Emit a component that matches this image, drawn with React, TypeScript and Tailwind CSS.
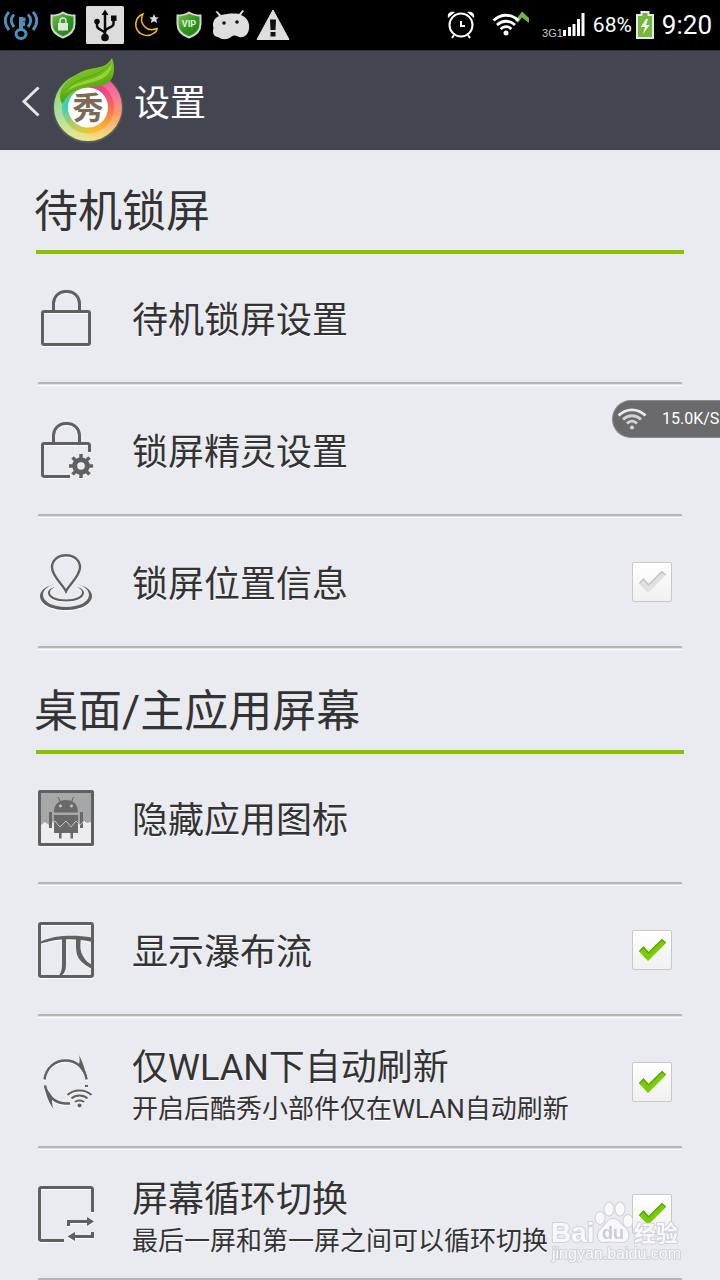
import { useState } from "react";
import type { ReactNode } from "react";

const ink = "#606060";

function KeySignalIcon() {
  return (
    <svg width="34" height="30" viewBox="0 0 34 30" fill="none" stroke="#4a92bd" strokeWidth="3">
      <path d="M5 2C0 7 0 14 5 20M10 4.500C6.500 8 6.500 13 10 17M29 2c5 5 5 12 0 18M24 4.500c3.500 3.500 3.500 8.500 0 12.500" />
      <ellipse cx="17" cy="24" rx="5" ry="4.500" />
      <path d="M17 20V7M17 9.500h4.500M17 14h4" strokeWidth="4" />
    </svg>
  );
}

function ShieldIcon({ children, id }: { children: ReactNode; id: string }) {
  return (
    <svg width="26" height="28" viewBox="0 0 26 28">
      <defs>
        <linearGradient id={id} x1="0" y1="0" x2="1" y2="1">
          <stop offset="0" stopColor="#7fc24a" />
          <stop offset="0.5" stopColor="#2f9a1c" />
          <stop offset="1" stopColor="#1c7a10" />
        </linearGradient>
      </defs>
      <path
        d="M13 1.500C9 4 5.500 4.500 1.500 4.500V13C1.500 20 6 24 13 26.500 20 24 24.500 20 24.500 13V4.500C20.500 4.500 17 4 13 1.500Z"
        fill={`url(#${id})`}
        stroke="#d4d8d4"
        strokeWidth="2"
      />
      {children}
    </svg>
  );
}

function UsbIcon() {
  return (
    <svg width="38" height="38" viewBox="0 0 38 38">
      <rect width="38" height="38" rx="1.500" fill="#dcdcdc" />
      <g fill="none" stroke="#0a0a0a" strokeWidth="2.500">
        <path d="M19 8v23M11 17v3c0 4 8 4 8 8M27.500 14v4c0 4-8.500 3.500-8.500 8" />
      </g>
      <path d="M19 3.500 22.500 9h-7ZM25 9.500h5.500V15H25Z" fill="#0a0a0a" />
      <circle cx="11" cy="15.500" r="2.800" fill="#0a0a0a" />
      <circle cx="19" cy="31.500" r="3.800" fill="#0a0a0a" />
    </svg>
  );
}

function MoonIcon() {
  return (
    <svg width="26" height="26" viewBox="0 0 26 26">
      <path
        d="M9 2C3 4 1 10 2 15c2 8 12 11 18 6 2-1 3-3 3-4.500-5 2-9 1.500-12-1.500C7 11 6.500 6.500 9 2Z"
        fill="none"
        stroke="#f5bd10"
        strokeWidth="1.500"
      />
      <path d="m20 2 1.400 3.200 3.400.2-2.500 2.200.8 3.400L20 9.200 16.900 11l.8-3.400-2.500-2.200 3.400-.2Z" fill="#ddd" />
    </svg>
  );
}

function DroidHeadIcon() {
  return (
    <svg width="38" height="30" viewBox="0 0 38 30">
      <path
        d="M7 6 3.500 1.500 5 1l4 4C14 4 21 3 27 4L30.500 0l1.500 1-3 4c6 2 9 8 8 14-1 6-5 9-10 8-3-2-6-2-8 0-4 3-9 3-13 0C2 27 0 23 1.500 18 0 13 2 8 7 6Z"
        fill="#dedede"
      />
      <circle cx="12" cy="13" r="1.800" fill="#111" />
      <circle cx="25" cy="12" r="1.800" fill="#111" />
    </svg>
  );
}

function WarningIcon() {
  return (
    <svg width="34" height="32" viewBox="0 0 34 32">
      <path d="M17 1 33 30.500H1Z" fill="#dedede" stroke="#dedede" strokeLinejoin="round" />
      <path d="M14 10.500h6l-.5 10.500h-5ZM14.500 23h5v4.500h-5Z" fill="#111" />
    </svg>
  );
}

function AlarmIcon() {
  return (
    <svg width="30" height="30" viewBox="0 0 30 30" fill="none" stroke="#fff" strokeWidth="2">
      <circle cx="15" cy="15" r="11.500" />
      <path d="M15 11v5h4M8 25l-2 3M22 25l2 3" />
      <path d="M2 8C1 3 4 1 9 2ZM28 8c1-5-2-7-7-6Z" fill="#fff" stroke="none" />
    </svg>
  );
}

function WifiUpIcon() {
  return (
    <svg width="38" height="28" viewBox="0 0 38 28" fill="none" stroke="#fff">
      <path d="m23 10 7-9.500L37 7v5l-7-5.500-4 5Z" fill="#6cbb3f" stroke="none" />
      <path d="M1.500 9.500C9 2.500 19 2.500 26.500 9.500M5 14c5.500-5 12.500-5 18 0M8.500 18c3.500-3 7.500-3 11 0" strokeWidth="2.800" />
      <circle cx="14" cy="22" r="2.500" fill="#fff" stroke="none" />
    </svg>
  );
}

function BarsIcon() {
  return (
    <svg width="22" height="24" viewBox="0 0 22 24" fill="#fff">
      <path d="M0 17h3v6H0ZM5 14h3v9H5ZM9.500 11h3v12h-3ZM14 6h3v17h-3ZM18.500 0h3v23h-3Z" />
    </svg>
  );
}

function BatteryIcon() {
  return (
    <svg width="18" height="28" viewBox="0 0 18 28">
      <path d="M5.500 4V1h7v3H17v23H1V4Z" fill="#71ba3c" stroke="#e8e8e8" strokeWidth="2" />
      <path d="M10 8 5 16h4l-2 7 6.500-9H10l2-6Z" fill="#fff" />
    </svg>
  );
}

function StatusBar() {
  return (
    <div className="flex h-[50px] shrink-0 items-center justify-between bg-black pr-2 text-white">
      <div className="grid grid-cols-[repeat(7,42px)] items-center justify-items-center">
        <KeySignalIcon />
        <ShieldIcon id="shield-lock">
          <path d="M8 12h10v7.500H8Z" fill="#dfe5df" />
          <path d="M10 12v-2a3 3 0 0 1 6 0v2" fill="none" stroke="#dfe5df" strokeWidth="1.500" />
        </ShieldIcon>
        <UsbIcon />
        <MoonIcon />
        <ShieldIcon id="shield-vip">
          <text x="13" y="16" textAnchor="middle" className="fill-[#e4eedd] font-[Roboto] text-[9px] font-bold">
            VIP
          </text>
        </ShieldIcon>
        <DroidHeadIcon />
        <WarningIcon />
      </div>
      <div className="flex items-center">
        <AlarmIcon />
        <span className="ml-4 flex">
          <WifiUpIcon />
        </span>
        <span className="ml-3 self-end font-['Liberation_Sans',sans-serif] text-[11px] leading-4 text-[#c8c8c8]">
          3G1
        </span>
        <BarsIcon />
        <span className="ml-2 text-[21px] leading-8">68%</span>
        <span className="mx-1 flex">
          <BatteryIcon />
        </span>
        <span className="ml-1 text-[26px] leading-8">9:20</span>
      </div>
    </div>
  );
}

function AppLogo() {
  return (
    <svg width="72" height="90" viewBox="0 0 72 90" aria-hidden="true">
      <defs>
        <linearGradient id="ring-left" x1="0" y1="0" x2="0" y2="1">
          <stop offset="0" stopColor="#8fcf4a" />
          <stop offset="0.6" stopColor="#a9e0a0" />
          <stop offset="1" stopColor="#f0e88a" />
        </linearGradient>
        <linearGradient id="ring-right" x1="0" y1="0" x2="0" y2="1">
          <stop offset="0" stopColor="#f0489a" />
          <stop offset="0.35" stopColor="#f9789a" />
          <stop offset="0.65" stopColor="#fba464" />
          <stop offset="1" stopColor="#f0e88a" />
        </linearGradient>
        <linearGradient id="inner-left" x1="0" y1="0" x2="0" y2="1">
          <stop offset="0" stopColor="#5fc63c" />
          <stop offset="0.5" stopColor="#3fcfc0" />
          <stop offset="1" stopColor="#f0c82a" />
        </linearGradient>
        <linearGradient id="inner-right" x1="0" y1="0" x2="0" y2="1">
          <stop offset="0" stopColor="#e8309a" />
          <stop offset="0.5" stopColor="#fb6a55" />
          <stop offset="1" stopColor="#f8c824" />
        </linearGradient>
        <linearGradient id="leaf" x1="0" y1="0" x2="0.4" y2="1">
          <stop offset="0" stopColor="#9ad634" />
          <stop offset="0.6" stopColor="#6ab81a" />
          <stop offset="1" stopColor="#3f9410" />
        </linearGradient>
        <radialGradient id="glow">
          <stop offset="0.88" stopColor="#e8f0a0" stopOpacity="0.3" />
          <stop offset="1" stopColor="#e8f0a0" stopOpacity="0" />
        </radialGradient>
      </defs>
      <circle cx="36" cy="52" r="36" fill="url(#glow)" />
      <path d="M36 17a34 34 0 0 0 0 68Z" fill="url(#ring-left)" />
      <path d="M36 17a34 34 0 0 1 0 68Z" fill="url(#ring-right)" />
      <path d="M36 25.500a26 26 0 0 0 0 52Z" fill="url(#inner-left)" />
      <path d="M36 25.500a26 26 0 0 1 0 52Z" fill="url(#inner-right)" />
      <circle cx="36" cy="51.500" r="20" fill="#fff" />
      <path
        d="M10 48C5 38 10 28 19.500 22 26 17 31 14.500 38 13c9-2 17-2 22-11 3 8 3 18-2 23-6 6-13 5-20 6-10 1-20 3-28 17Z"
        fill="url(#leaf)"
      />
      <path d="M13 37C24 20 47 29 60 8 57 31 29 23 13 37Z" fill="#bdea52" opacity="0.55" />
      <path d="M14 35C26 18 46 24 59 7" fill="none" stroke="#55a614" />
      <text
        x="36"
        y="63"
        textAnchor="middle"
        className="fill-[#7c6a55] font-['Noto_Sans_CJK_SC',sans-serif] text-[31px] font-bold"
      >
        秀
      </text>
    </svg>
  );
}

function ActionBar() {
  return (
    <header className="flex h-[100px] shrink-0 items-center border-t border-[#30333c] bg-[#434651] pl-5 text-white">
      <button type="button" aria-label="返回" className="flex items-center">
        <svg width="22" height="32" viewBox="0 0 22 32" fill="none" stroke="#e4e4e6" strokeWidth="3">
          <path d="M18.500 2.500 4 16.500l14.500 14" />
        </svg>
      </button>
      <span className="ml-2.5 flex">
        <AppLogo />
      </span>
      <h1 className="ml-2.5 pt-1.5 text-[36px] leading-[48px]">设置</h1>
    </header>
  );
}

function RowIcon({ children }: { children: ReactNode }) {
  return (
    <svg
      width="56"
      height="56"
      viewBox="0 0 56 56"
      fill="none"
      stroke={ink}
      strokeWidth="3"
      className="shrink-0 drop-shadow-[0_1px_0_#ffffff]"
      aria-hidden="true"
    >
      {children}
    </svg>
  );
}

const shackle = "M15.500 21V13.500a12 12 0 0 1 12-12h2a12 12 0 0 1 12 12V21";

function LockIcon() {
  return (
    <RowIcon>
      <rect x="4.500" y="21.500" width="47" height="33" rx="1.500" />
      <path d={shackle} />
    </RowIcon>
  );
}

function LockGearIcon() {
  return (
    <RowIcon>
      <path d={shackle} />
      <path d="M51.500 30v-7a1.500 1.500 0 0 0-1.500-1.500H6A1.500 1.500 0 0 0 4.500 23v30A1.500 1.500 0 0 0 6 54.500h26" />
      <circle cx="43" cy="44" r="6.300" strokeWidth="5" />
      <path
        d="M43 32v4M43 52v4M31 44h4M51 44h4M34.500 35.500l3 3M48.500 49.500l3 3M51.500 35.500l-3 3M37.500 49.500l-3 3"
        strokeWidth="3.500"
      />
    </RowIcon>
  );
}

function PinIcon() {
  return (
    <RowIcon>
      <path
        d="M28 37.500C25 31 14 22 14 13.500 14 6 20 1.200 28 1.200S42 6 42 13.500C42 22 31 31 28 37.500Z"
        strokeWidth="2.400"
      />
      <g fill={ink} stroke="none">
        <path d="M17 30C9 32 2 36 2 42c0 8 11 14 26 14s26-6 26-14c0-6-7-10-15-12 7 2 12 6 12 11 0 7-10 12-23 12S5 48 5 41c0-5 5-9 12-11Z" />
        <path d="M17 33c-4 1-7 3-7 6 0 5 8 8.500 18 8.500S46 44 46 39c0-3-3-5-7-6 3 1.500 5 3 5 5.500 0 4-7 7-16 7s-16-3-16-7c0-2.500 2-4 5-5.500Z" />
      </g>
    </RowIcon>
  );
}

function HiddenAppIcon() {
  return (
    <RowIcon>
      <rect x="1.500" y="1.500" width="53" height="53" rx="1" fill="#a6a7a8" />
      <path d="M3 35l4-3 4 3 6-4 6 5 5-5 5 5 5-5 4 4 4-4 3 2 4-1v21H3Z" fill="#ededf1" stroke="none" />
      <g fill="#69696a" stroke="none">
        <path d="M16 22.500C16 14 21 10 28 10s12 4 12 12.500ZM16 25h24v18H16ZM11 22h3v16h-3ZM42 22h3v16h-3ZM21 43h2.500v5.500H21ZM32.500 43H35v5.500h-2.500Z" />
      </g>
      <path d="m22.500 12-2.500-5M33.500 12l2-5" strokeWidth="1" />
      <path d="M14 33l3-2 5 6 6-6 5 6 5-6 4 4 3-3" stroke="#c4c4c6" strokeWidth="1" />
      <circle cx="22.500" cy="16" r="1.400" fill="#ccc" stroke="none" />
      <circle cx="33.500" cy="16" r="1.400" fill="#ccc" stroke="none" />
      <rect x="1.500" y="1.500" width="53" height="53" rx="1" />
    </RowIcon>
  );
}

function WaterfallIcon() {
  return (
    <RowIcon>
      <rect x="1.500" y="1.500" width="53" height="53" rx="1.500" />
      <g fill={ink} stroke="none">
        <path d="M3 19.500C16 13 36 12.500 54 15.500V20C38 16 19 16 3 21.500Z" />
        <path d="M24 16h4v27c0 5-1.500 8-4 10.500h-3c2-3 3-6 3-10.500Z" />
        <path d="M38 16h5c-1 8-1 13 2 18 2 4 5 7 8.500 8.500v4C48 44 43 40 40.500 36 37.500 31 38 24 38 16Z" />
      </g>
    </RowIcon>
  );
}

function RefreshWifiIcon() {
  return (
    <RowIcon>
      <path d="M6.500 25.500C8 14 17 6.500 27.500 6.500S47 14 48.500 25.500" strokeWidth="2.400" />
      <path d="M7 31.500C9 42 17 49 27 49.500h5" strokeWidth="2.400" />
      <g fill={ink} stroke="none">
        <path d="M41 1c4 7 6 15 8.500 24L40 11c2-2 2-6 1-10Z" />
        <path d="M6 31l8.500 12c-1 4-.5 8 1 12C10 48 8 40 6 31Z" />
        <circle cx="41.500" cy="51.500" r="2" />
      </g>
      <path
        d="M29.500 41c6.500-6 17.500-6 24 0M33.500 44.500c4.500-4 11.500-4 16 0M37 48c2.500-2 6.500-2 9 0M47 32h3"
        strokeWidth="2"
      />
    </RowIcon>
  );
}

function LoopIcon() {
  return (
    <RowIcon>
      <path d="M54.500 26V3A1.500 1.500 0 0 0 53 1.500H3A1.500 1.500 0 0 0 1.500 3v50A1.500 1.500 0 0 0 3 54.500h23" />
      <path d="M30.500 40v-4.500H50M54.500 46v4.500H36" />
      <path d="m49 31 7 4.500-7 4.500ZM37 46l-7.500 4.500L37 55Z" fill={ink} stroke="none" />
    </RowIcon>
  );
}

type CheckProps = {
  id: string;
  checked: boolean;
  onChange: () => void;
};

function Check({ id, checked, onChange }: CheckProps) {
  return (
    <span className="mr-2.5 grid size-10 shrink-0">
      <input
        id={id}
        type="checkbox"
        checked={checked}
        onChange={onChange}
        className="col-start-1 row-start-1 size-10 appearance-none rounded-[2px] border border-[#c8c8ca] bg-linear-to-b from-white to-[#f0f0f0]"
      />
      <svg width="40" height="40" viewBox="0 0 40 40" className="pointer-events-none col-start-1 row-start-1">
        <path d="M7 21.500 11.500 16.500 16.500 22 30 9 34 13 16 31Z" fill={checked ? "#78cc00" : "#e2e2e2"} />
        <path
          d="M7.500 21.500 11.500 17.200 16.500 23 30 9.800 33.500 13"
          fill="none"
          stroke={checked ? "#5fa80c" : "#c4c4c4"}
          strokeWidth="1.500"
        />
      </svg>
    </span>
  );
}

type Item = {
  id: string;
  title: string;
  note?: string;
  icon: ReactNode;
  toggle?: boolean;
};

type Section = { title: string; items: Item[] };

const sections: Section[] = [
  {
    title: "待机锁屏",
    items: [
      { id: "lock", title: "待机锁屏设置", icon: <LockIcon /> },
      { id: "sprite", title: "锁屏精灵设置", icon: <LockGearIcon /> },
      { id: "location", title: "锁屏位置信息", icon: <PinIcon />, toggle: true },
    ],
  },
  {
    title: "桌面/主应用屏幕",
    items: [
      { id: "hide", title: "隐藏应用图标", icon: <HiddenAppIcon /> },
      { id: "waterfall", title: "显示瀑布流", icon: <WaterfallIcon />, toggle: true },
      {
        id: "wlan",
        title: "仅WLAN下自动刷新",
        note: "开启后酷秀小部件仅在WLAN自动刷新",
        icon: <RefreshWifiIcon />,
        toggle: true,
      },
      {
        id: "loop",
        title: "屏幕循环切换",
        note: "最后一屏和第一屏之间可以循环切换",
        icon: <LoopIcon />,
        toggle: true,
      },
    ],
  },
];

function RowBody({ item }: { item: Item }) {
  return (
    <>
      {item.icon}
      <span className="flex min-w-0 flex-1 flex-col pt-1.5 pl-[38px] text-left [text-shadow:0_1px_0_#ffffff]">
        <span className="text-[36px] leading-[48px]">{item.title}</span>
        {item.note && <span className="text-[26px] leading-[34px] whitespace-nowrap">{item.note}</span>}
      </span>
    </>
  );
}

function Watermark() {
  return (
    <svg
      width="132"
      height="66"
      viewBox="0 0 132 66"
      className="pointer-events-none absolute right-[38px] bottom-[14px] opacity-90"
      fill="#fafafc"
      stroke="#cfd0d5"
      strokeWidth="2"
      strokeLinejoin="round"
      paintOrder="stroke"
    >
      <text x="1" y="42" className="font-['Liberation_Sans',sans-serif] text-[28px] font-bold">
        Bai
      </text>
      <ellipse cx="50" cy="18" rx="4.500" ry="6" />
      <ellipse cx="59" cy="9" rx="4.500" ry="6.500" />
      <ellipse cx="70" cy="9" rx="4.500" ry="6.500" />
      <ellipse cx="78" cy="21" rx="4.500" ry="6" />
      <path d="M63 19c6 0 8 6 12 9 5 4 5 14-3 14-6 0-12-1-17 0-8 1-9-9-4-13 5-4 6-10 12-10Z" />
      <text
        x="63"
        y="39"
        textAnchor="middle"
        className="fill-[#c9cad0] font-['Liberation_Sans',sans-serif] text-[18px] font-bold"
        stroke="none"
      >
        du
      </text>
      <text x="84" y="41" className="font-['Noto_Sans_CJK_SC',sans-serif] text-[22px] font-bold">
        经验
      </text>
      <text x="2" y="59" className="font-['Liberation_Sans',sans-serif] text-[16px]">
        jingyan.baidu.com
      </text>
    </svg>
  );
}

export default function App() {
  const [on, setOn] = useState<Record<string, boolean>>({
    location: false,
    waterfall: true,
    wlan: true,
    loop: true,
  });

  const rowClass =
    "flex h-[132px] w-full shrink-0 items-center border-b-4 border-transparent";

  return (
    <div className="relative flex h-screen flex-col overflow-hidden bg-[#eaebf0] font-[Roboto,'Noto_Sans_CJK_SC',sans-serif] text-[#333333]">
      <StatusBar />
      <ActionBar />
      <main>
        {sections.map((section) => (
          <section key={section.title}>
            <h2 className="mx-9 h-[104px] border-b-4 border-[#8fc000] pt-[34px] -indent-0.5 text-[44px] leading-[56px]">
              {section.title}
            </h2>
            <ul className="px-[38px]">
              {section.items.map((item) => (
                <li key={item.id}>
                  {item.toggle ? (
                    <label htmlFor={item.id} className={rowClass}>
                      <RowBody item={item} />
                      <Check
                        id={item.id}
                        checked={on[item.id]}
                        onChange={() => setOn({ ...on, [item.id]: !on[item.id] })}
                      />
                    </label>
                  ) : (
                    <button type="button" className={rowClass}>
                      <RowBody item={item} />
                    </button>
                  )}
                  <div className="-mt-1 h-1 border-t-2 border-b border-t-[#b4b5b7] border-b-white bg-[#dcdddd]" />
                </li>
              ))}
            </ul>
          </section>
        ))}
      </main>

      {/* floating network speed bubble */}
      <div className="absolute top-[400px] right-0 flex h-[38px] w-[108px] items-center rounded-l-full border border-r-0 border-[#8a8a8c] bg-[#6a6a6c] pl-1 text-white">
        <svg width="30" height="24" viewBox="0 0 30 24" fill="none" stroke="#d4d4d4" strokeWidth="2.800">
          <path d="M1.500 8.500c8-7.500 19-7.500 27 0" stroke="#ececec" />
          <path d="M6 12.500c5.500-5 12.500-5 18 0M10 16.500c3-3 7-3 10 0" />
          <circle cx="15" cy="20.500" r="2" fill="#d4d4d4" stroke="none" />
        </svg>
        <span className="ml-[15px] text-[16px] leading-5">15.0K/S</span>
      </div>

      <Watermark />
    </div>
  );
}
